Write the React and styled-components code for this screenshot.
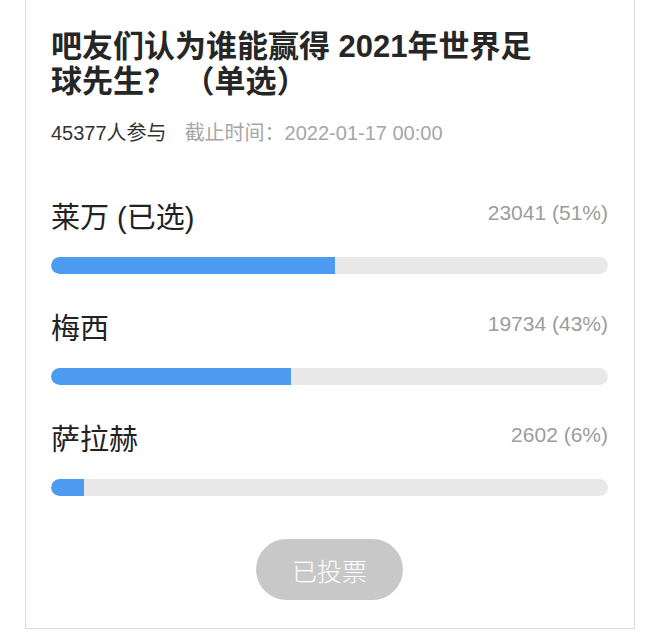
import styled, { createGlobalStyle } from "styled-components";

const options = [
    { name: "莱万 (已选)", votes: 23041, pct: 51 },
    { name: "梅西", votes: 19734, pct: 43 },
    { name: "萨拉赫", votes: 2602, pct: 6 },
];

const GlobalStyle = createGlobalStyle`
    html, body {
        margin: 0;
        padding: 0;
        background: #fff;
        font-family: "Liberation Sans", "Noto Sans CJK SC", sans-serif;
    }
`;

export default function App() {
    return (
        <>
            <GlobalStyle />
            <Card>
                <Title>吧友们认为谁能赢得 2021年世界足球先生？ （单选）</Title>
                <Meta>
                    <span className="count">45377人参与</span>
                    <span className="deadline">截止时间：2022-01-17 00:00</span>
                </Meta>
                <Options>
                    {options.map(o => (
                        <Option key={o.name}>
                            <OptionHead>
                                <Label>{o.name}</Label>
                                <Votes>{o.votes} ({o.pct}%)</Votes>
                            </OptionHead>
                            <Track>
                                <Fill style={{ width: `${o.pct}%` }} />
                            </Track>
                        </Option>
                    ))}
                </Options>
                <Footer>
                    <VotedBtn disabled>已投票</VotedBtn>
                </Footer>
            </Card>
        </>
    );
}

const Card = styled.div`
    box-sizing: border-box;
    width: 610px;
    margin: 0 0 0 25px;
    padding: 29px 26px 28px 25px;
    border: 1px solid #dcdcdc;
    border-top: none;
    background: #fff;
`;

const Title = styled.h1`
    margin: 0;
    max-width: 492px;
    font-size: 31px;
    line-height: 35px;
    font-weight: 600;
    color: #262626;
`;

const Meta = styled.div`
    margin-top: 22px;
    display: flex;
    gap: 18px;
    font-size: 20px;
    line-height: 24px;
    .count{
        color: #333;
    }
    .deadline{
        color: #a6a6a6;
    }
`;

const Options = styled.div`
    margin-top: 52px;
    display: flex;
    flex-direction: column;
    gap: 34px;
`;

const Option = styled.div`
    display: flex;
    flex-direction: column;
    gap: 24px;
`;

const OptionHead = styled.div`
    display: flex;
    justify-content: space-between;
    align-items: center;
    height: 36px;
`;

const Label = styled.div`
    font-size: 29px;
    color: #222;
`;

const Votes = styled.div`
    font-size: 21px;
    color: #9c9c9c;
    margin-top: -4px;
`;

const Track = styled.div`
    height: 17px;
    border-radius: 9px;
    background: #e8e8e8;
    overflow: hidden;
`;

const Fill = styled.div`
    height: 100%;
    background: #4c9bf0;
    border-radius: 9px 0 0 9px;
`;

const Footer = styled.div`
    margin-top: 43px;
    display: flex;
    justify-content: center;
`;

const VotedBtn = styled.button`
    width: 147px;
    height: 61px;
    border: none;
    border-radius: 31px;
    background: #c8c8c8;
    color: #fff;
    font-family: inherit;
    font-size: 25px;
    font-weight: 300;
    padding: 0;
`;
